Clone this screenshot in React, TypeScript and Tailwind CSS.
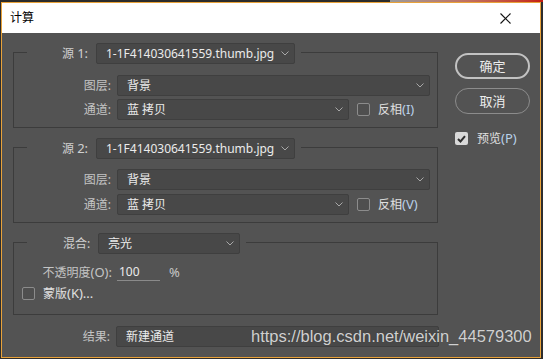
import React from "react";

const FONT = { fontFamily: "'Noto Sans', 'Noto Sans CJK SC', sans-serif" };

function Chevron() {
  return (
    <svg width="8" height="5" viewBox="0 0 8 5" className="shrink-0">
      <polyline points="0.5,0.5 4,4 7.5,0.5" fill="none" stroke="#a8a8a8" strokeWidth="1" />
    </svg>
  );
}

function Select({ w, text, arrow = true }: { w: string; text: string; arrow?: boolean }) {
  return (
    <div
      className={`${w} h-[21px] shrink-0 flex items-center justify-between rounded-[2px] border border-[#3f3f3f] bg-[#484848] pl-[9px] pr-[5px] text-[12px] text-[#ebebeb]`}
    >
      <span className="whitespace-nowrap leading-none">{text}</span>
      {arrow && <Chevron />}
    </div>
  );
}

function Check({ checked = false }: { checked?: boolean }) {
  if (checked) {
    return (
      <div className="w-[13px] h-[13px] shrink-0 rounded-[2px] bg-[#d9d9d9] flex items-center justify-center">
        <svg width="9" height="8" viewBox="0 0 9 8">
          <polyline points="1,4 3.5,6.5 8,1.2" fill="none" stroke="#2e2e2e" strokeWidth="2" />
        </svg>
      </div>
    );
  }
  return <div className="w-[13px] h-[13px] shrink-0 rounded-[2px] border border-[#8c8c8c] bg-[#4f4f4f]" />;
}

function Row({ label, children, className = "" }: { label: string; children: React.ReactNode; className?: string }) {
  return (
    <div className={`flex items-center ${className}`}>
      <div className="w-[97px] shrink-0 text-right text-[12px] text-[#c4c4c4] leading-none">{label}</div>
      <div className="ml-[6px] flex items-center">{children}</div>
    </div>
  );
}

function Key({ k }: { k: string }) {
  return <span className="text-[13px] text-[#b9d1ea]">({k})</span>;
}

function SourceGroup({ n, rowMt, row2Mt }: { n: string; rowMt: string; row2Mt: string }) {
  return (
    <fieldset className="border border-[#3c3c3c] pb-[7px]">
      <legend className="ml-[13px] pt-[3px]">
        <div className="flex items-center pl-[35px] pr-[6px]">
          <div className="w-[34px] text-[12px] text-[#d0d0d0] leading-none whitespace-nowrap">
            源 <span className="text-[13px]">{n}:</span>
          </div>
          <Select w="w-[199px]" text="1-1F414030641559.thumb.jpg" />
        </div>
      </legend>
      <Row label="图层:" className={rowMt}>
        <Select w="w-[313px]" text="背景" />
      </Row>
      <Row label="通道:" className={row2Mt}>
        <Select w="w-[232px]" text="蓝 拷贝" />
        <div className="ml-[8px]">
          <Check />
        </div>
        <div className="ml-[8px] text-[12px] text-[#e0e0e0] leading-none whitespace-nowrap">
          反相<Key k={n === "1" ? "I" : "V"} />
        </div>
      </Row>
    </fieldset>
  );
}

export default function App() {
  return (
    <div className="w-[543px] h-[359px] bg-[#2d2d2d] flex flex-col overflow-hidden" style={FONT}>
      <div className="h-[2px] flex shrink-0">
        <div className="w-[390px] bg-[#2b2b2b]" />
        <div className="flex-1 bg-gradient-to-r from-[#9a9a9a] via-[#c07060] to-[#c41a10]" />
      </div>
      <div className="pl-[1px]">
        <div className="relative w-[540px] h-[356px] border border-[#e8a23a] flex flex-col">
          {/* title bar */}
          <div className="h-[30px] bg-white flex items-center justify-between pl-[8px] pr-[29px] shrink-0">
            <span className="text-[12px] text-black leading-none">计算</span>
            <svg width="11" height="11" viewBox="0 0 11 11">
              <line x1="0.5" y1="0.5" x2="10.5" y2="10.5" stroke="#111" strokeWidth="1.1" />
              <line x1="10.5" y1="0.5" x2="0.5" y2="10.5" stroke="#111" strokeWidth="1.1" />
            </svg>
          </div>
          {/* body */}
          <div className="flex-1 bg-[#535353] flex items-start pl-[11px]">
            <div className="w-[425px] pt-[7px] flex flex-col">
              <SourceGroup n="1" rowMt="mt-[11px]" row2Mt="mt-[3px]" />
              <div className="mt-[7px]">
                <SourceGroup n="2" rowMt="mt-[10px]" row2Mt="mt-[4px]" />
              </div>
              <fieldset className="mt-[7px] border border-[#3c3c3c] pb-[14px]">
                <legend className="ml-[13px] pt-[3px]">
                  <div className="flex items-center pl-[36px] pr-[6px]">
                    <div className="w-[35px] text-[12px] text-[#d0d0d0] leading-none whitespace-nowrap">混合:</div>
                    <Select w="w-[142px]" text="亮光" />
                  </div>
                </legend>
                <div className="mt-[9px] h-[18px] flex items-center">
                  <div className="w-[98px] shrink-0 text-right text-[12px] text-[#c4c4c4] leading-none whitespace-nowrap">
                    不透明度<span className="text-[13px]">(O):</span>
                  </div>
                  <div className="ml-[5px] w-[43px] h-[18px] border-b border-[#8a8a8a] flex items-center pl-[2px] text-[12px] text-[#ebebeb] leading-none">
                    100
                  </div>
                  <div className="ml-[9px] text-[13px] text-[#c8c8c8] leading-none">%</div>
                </div>
                <div className="mt-[6px] flex items-center pl-[8px]">
                  <Check />
                  <div className="ml-[8px] text-[12px] text-[#e0e0e0] leading-none whitespace-nowrap">
                    蒙版<span className="text-[13px]">(K)...</span>
                  </div>
                </div>
              </fieldset>
              <Row label="结果:" className="mt-[11px]">
                <Select w="w-[323px]" text="新建通道" arrow={false} />
              </Row>
            </div>
            <div className="ml-[17px] w-[75px] pt-[20px] flex flex-col">
              <div className="h-[26px] rounded-full border-2 border-[#c2c2c2] flex items-center justify-center text-[13px] text-[#ececec] leading-none">
                确定
              </div>
              <div className="mt-[9px] h-[26px] rounded-full border border-[#8c8c8c] flex items-center justify-center text-[13px] text-[#ececec] leading-none">
                取消
              </div>
              <div className="mt-[18px] flex items-center">
                <Check checked />
                <div className="ml-[9px] text-[12px] text-[#e0e0e0] leading-none whitespace-nowrap">
                  预览<Key k="P" />
                </div>
              </div>
            </div>
          </div>
          {/* watermark */}
          <div
            className="absolute left-[249px] top-[325px] text-[16.5px] text-[#d0d0d0] leading-none whitespace-nowrap"
            style={{ fontFamily: "'Liberation Sans', Arial, sans-serif", textShadow: "0 0 1px rgba(0,0,0,0.25)" }}
          >
            https://blog.csdn.net/weixin_44579300
          </div>
        </div>
      </div>
    </div>
  );
}
